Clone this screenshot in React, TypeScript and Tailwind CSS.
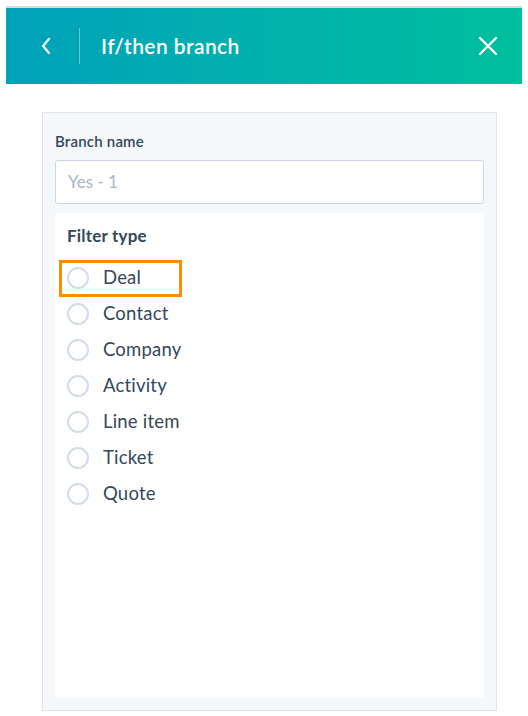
import React from "react";

const items = ["Deal", "Contact", "Company", "Activity", "Line item", "Ticket", "Quote"];

export default function App() {
  return (
    <div
      className="w-[528px] h-[716px] bg-white flex flex-col"
      style={{ fontFamily: "Lato, 'Open Sans', sans-serif" }}
    >
      <div className="mt-[6px] mx-[6px] border-t-2 border-[#dadada] h-[78px] bg-gradient-to-r from-[#00a2ba] to-[#00bf9d] flex items-center text-white">
        <div className="w-[73px] flex justify-center pl-[6px]">
          <svg width="12" height="18" viewBox="0 0 12 18" fill="none">
            <path d="M9 2 L3 9 L9 16" stroke="white" strokeWidth="2.2" strokeLinecap="round" strokeLinejoin="round" />
          </svg>
        </div>
        <div className="w-px h-[36px] bg-white/40" />
        <div className="ml-[21px] text-[21px] font-semibold tracking-[0.4px] flex-1">If/then branch</div>
        <div className="mr-[24px]">
          <svg width="20" height="20" viewBox="0 0 20 20" fill="none">
            <path d="M2 2 L18 18 M18 2 L2 18" stroke="white" strokeWidth="2.4" strokeLinecap="round" />
          </svg>
        </div>
      </div>
      <div className="mt-[28px] ml-[42px] w-[455px] h-[599px] border border-[#dfe3eb] bg-[#f5f8fa] px-[12px] pt-[19px] pb-[12px] flex flex-col">
        <div className="text-[15px] font-semibold text-[#33475b] leading-[18px] tracking-[0.2px]">Branch name</div>
        <div className="mt-[10px] h-[44px] rounded-[3px] border border-[#cbd6e2] bg-white flex items-center px-[12px] text-[17px] text-[#a5b7cb]">
          Yes - 1
        </div>
        <div className="mt-[9px] flex-1 bg-white px-[12px] pt-[12px]">
          <div className="text-[17px] font-bold text-[#33475b] leading-[22px] tracking-[0.2px]">Filter type</div>
          <div className="mt-[13px] flex flex-col">
            {items.map((it, i) => (
              <div key={it} className="h-[36px] flex items-center relative">
                {i === 0 && (
                  <div className="absolute left-[-8px] top-[0px] w-[123px] h-[37px] border-[3px] border-[#ff8c00]" />
                )}
                <div className="w-[22px] h-[22px] rounded-full border-2 border-[#d3dce8] bg-white" />
                <div className="ml-[14px] text-[18.5px] text-[#33475b] tracking-[0.2px]">{it}</div>
              </div>
            ))}
          </div>
        </div>
      </div>
    </div>
  );
}
